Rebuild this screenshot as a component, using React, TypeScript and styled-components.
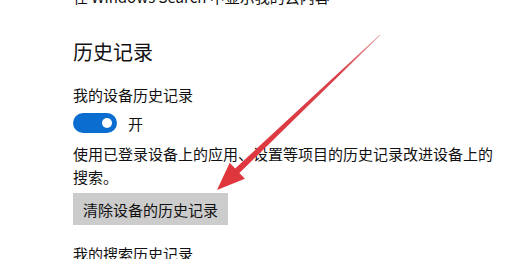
import React from "react";
import styled, { createGlobalStyle } from "styled-components";

const GlobalStyle = createGlobalStyle`
  html, body {
    margin: 0;
    padding: 0;
    background: #ffffff;
    overflow: hidden;
  }
  body {
    font-family: "Noto Sans CJK SC", "Noto Sans", sans-serif;
    color: #111111;
  }
`;

const Page = styled.div`
  position: relative;
  width: 516px;
  height: 259px;
  overflow: hidden;
  padding-left: 73px;
  box-sizing: border-box;
`;

const Line = styled.div<{ $top: number }>`
  font-size: 15px;
  line-height: 23px;
  margin-top: ${(p) => p.$top}px;
  white-space: nowrap;
`;

const Heading = styled.h2`
  font-size: 20px;
  font-weight: 400;
  line-height: 28px;
  margin: 30px 0 0;
`;

const ToggleRow = styled.div`
  display: flex;
  align-items: center;
  gap: 11px;
  margin-top: 7px;
  height: 20px;
  font-size: 15px;
`;

const Toggle = styled.div<{ $on: boolean }>`
  width: 44px;
  height: 20px;
  border-radius: 10px;
  background: ${(p) => (p.$on ? "#0b6dd0" : "#ffffff")};
  display: flex;
  align-items: center;
  justify-content: ${(p) => (p.$on ? "flex-end" : "flex-start")};
  padding: 0 5px;
  box-sizing: border-box;
`;

const Knob = styled.div`
  width: 10px;
  height: 10px;
  border-radius: 50%;
  background: #ffffff;
`;

const Description = styled.p`
  font-size: 15px;
  line-height: 23px;
  margin: 9px 0 0;
  width: 430px;
`;

const Button = styled.button`
  display: block;
  margin-top: 5px;
  height: 32px;
  width: 155px;
  padding: 0;
  border: none;
  background: #cccccc;
  font-family: inherit;
  font-size: 15px;
  color: #111111;
  text-align: center;
`;

const ArrowLayer = styled.svg`
  position: absolute;
  left: 0;
  top: 0;
  pointer-events: none;
`;

const Arrow = () => {
  const tip = { x: 217, y: 190 };
  const start = { x: 380, y: 35 };
  const dx = start.x - tip.x;
  const dy = start.y - tip.y;
  const len = Math.hypot(dx, dy);
  const ux = dx / len;
  const uy = dy / len;
  const nx = -uy;
  const ny = ux;
  const headLen = 28;
  const headW = 11;
  const shaftW = 3;
  const bx = tip.x + ux * headLen;
  const by = tip.y + uy * headLen;
  const pts = [
    [tip.x, tip.y],
    [bx + nx * headW, by + ny * headW],
    [bx + nx * shaftW, by + ny * shaftW],
    [start.x + nx * 0.4, start.y + ny * 0.4],
    [start.x - nx * 0.4, start.y - ny * 0.4],
    [bx - nx * shaftW, by - ny * shaftW],
    [bx - nx * headW, by - ny * headW],
  ]
    .map(([x, y]) => `${x.toFixed(1)},${y.toFixed(1)}`)
    .join(" ");
  return (
    <ArrowLayer width={516} height={259} viewBox="0 0 516 259">
      <defs>
        <linearGradient id="arrowFade" x1={start.x} y1={start.y} x2={tip.x} y2={tip.y} gradientUnits="userSpaceOnUse">
          <stop offset="0" stopColor="#e8a0a4" />
          <stop offset="0.25" stopColor="#d9404a" />
          <stop offset="1" stopColor="#e0353b" />
        </linearGradient>
      </defs>
      <polygon points={pts} fill="url(#arrowFade)" />
    </ArrowLayer>
  );
};

export default function App() {
  return (
    <>
      <GlobalStyle />
      <Page>
        <Line $top={-15}>在 Windows Search 中显示我的云内容</Line>
        <Heading>历史记录</Heading>
        <Line $top={17}>我的设备历史记录</Line>
        <ToggleRow>
          <Toggle $on>
            <Knob />
          </Toggle>
          <span>开</span>
        </ToggleRow>
        <Description>
          使用已登录设备上的应用、设置等项目的历史记录改进设备上的搜索。
        </Description>
        <Button>清除设备的历史记录</Button>
        <Line $top={17}>我的搜索历史记录</Line>
        <Arrow />
      </Page>
    </>
  );
}
